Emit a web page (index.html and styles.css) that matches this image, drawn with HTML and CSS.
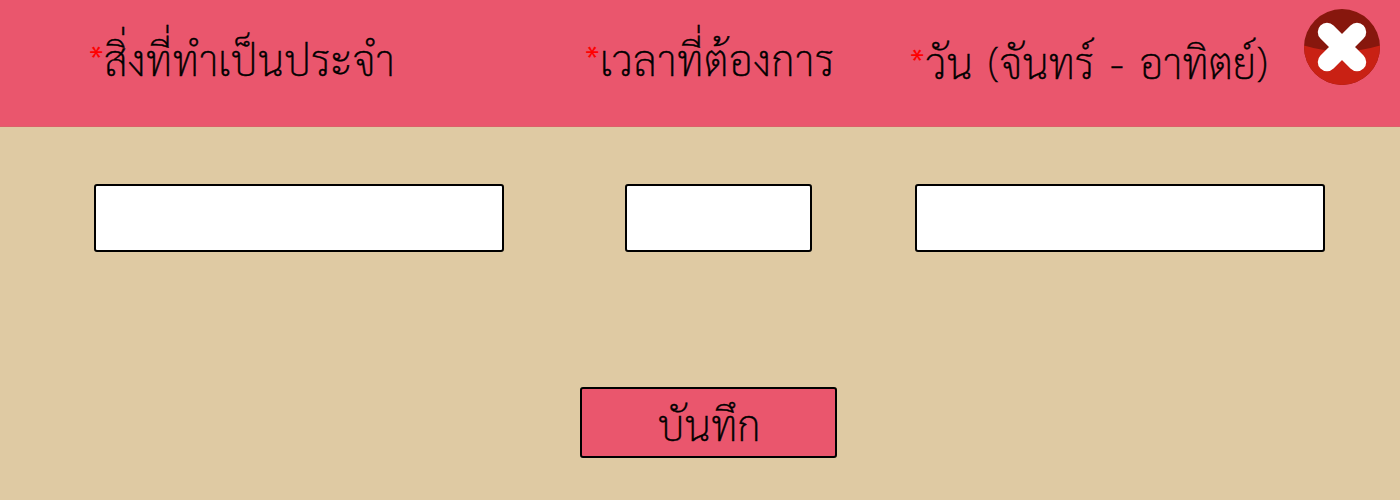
FILE: index.html
```html
<!DOCTYPE html>
<html lang="th">
<head>
<meta charset="utf-8">
<title>บันทึก</title>
<link rel="stylesheet" href="styles.css">
</head>
<body>
<form class="page">
<header class="header">
<label class="heading heading-task" for="task"><span class="star">*</span><span class="label">สิ่งที่ทำเป็นประจำ</span></label>
<label class="heading heading-time" for="time"><span class="star">*</span><span class="label">เวลาที่ต้องการ</span></label>
<label class="heading heading-day" for="day"><span class="star">*</span><span class="label">วัน (จันทร์ - อาทิตย์)</span></label>
<button class="close" type="button" aria-label="ปิด">
<svg class="close-icon" viewBox="0 0 76 76"><circle cx="38" cy="38" r="38" fill="#87170d"/><path d="M0 36.5Q18 42 38 42Q58 42 76 36.5L76 38A38 38 0 0 1 0 38Z" fill="#c92114"/><path d="M23 23L53 53M53 23L23 53" stroke="#fff" stroke-width="18.5" stroke-linecap="round"/></svg>
</button>
</header>
<div class="fields">
<input class="field" id="task"><input class="field field-time" id="time"><input class="field field-day" id="day">
</div>
<button class="save" type="button">บันทึก</button>
</form>
</body>
</html>
```
FILE: styles.css
```css
* { box-sizing: border-box; }
body { margin: 0; background: #dfcaa3; font-family: "Sarabun", "Noto Sans Thai Looped", sans-serif; font-weight: 200; }
.page { height: 500px; display: flex; flex-direction: column; overflow: hidden; }
.header { height: 127px; background: #ea566d; border-bottom: 1px solid #dc6069; display: flex; align-items: flex-start; }
.heading { display: flex; white-space: nowrap; font-size: 42px; line-height: 60px; padding-top: 29px; color: #000; -webkit-text-stroke: 0.5px currentColor; }
.star { width: 14px; color: #f00; font-size: 32px; font-weight: 300; line-height: 54px; margin-left: -1px; -webkit-text-stroke: 0; }
.label { margin-left: 1px; }
.heading-task { margin-left: 90px; width: 496px; }
.heading-task .label { letter-spacing: 0.15px; }
.heading-time { width: 325px; }
.heading-time .label { letter-spacing: 0.4px; }
.heading-day { width: 393px; padding-top: 32px; }
.heading-day .label { margin-left: 2px; word-spacing: 5px; letter-spacing: -0.2px; }
.close { width: 76px; height: 76px; margin-top: 9px; padding: 0; border: 0; background: none; }
.close-icon { display: block; width: 76px; height: 76px; fill: none; }
.fields { display: flex; padding: 57px 0 0 94px; }
.field { width: 410px; height: 68px; background: #fff; border: 2px solid #000; border-radius: 3px; }
.field-time { width: 187px; margin-left: 121px; }
.field-day { margin-left: 103px; }
.save { width: 257px; height: 71px; margin: 135px 0 0 580px; background: #ea566d; border: 2px solid #000; border-radius: 3px; font-family: inherit; font-weight: 200; font-size: 42px; line-height: 60px; color: #000; padding: 2px 0 0 1px; -webkit-text-stroke: 0.5px currentColor; }
```
